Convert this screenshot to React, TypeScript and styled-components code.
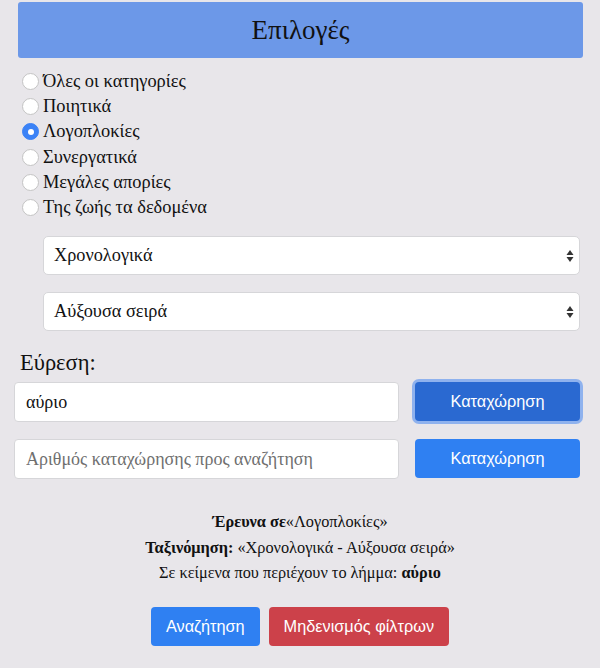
import React, { useState } from 'react';
import styled, { createGlobalStyle } from 'styled-components';

const categories = [
  'Όλες οι κατηγορίες',
  'Ποιητικά',
  'Λογοπλοκίες',
  'Συνεργατικά',
  'Μεγάλες απορίες',
  'Της ζωής τα δεδομένα',
];

const GlobalStyle = createGlobalStyle`
  html, body {
    margin: 0;
    padding: 0;
    background: #e8e6ea;
  }
  body {
    font-family: 'Liberation Serif', 'DejaVu Serif', serif;
    color: #111;
  }
`;

const Page = styled.div`
  width: 600px;
  min-height: 668px;
  padding: 2px 20px 0 14px;
  box-sizing: border-box;
`;

const Header = styled.h1`
  margin: 0 0 0 4px;
  width: 565px;
  height: 56px;
  display: flex;
  align-items: center;
  justify-content: center;
  background: #6c98e8;
  border-radius: 3px;
  font-weight: 400;
  font-size: 27px;
  color: #111;
`;

const RadioList = styled.div`
  display: flex;
  flex-direction: column;
  margin: 11px 0 0 8px;
`;

const RadioRow = styled.label`
  display: flex;
  align-items: center;
  height: 25.2px;
  font-size: 18.4px;
  gap: 4px;
`;

const RadioDot = styled.span<{ $checked: boolean }>`
  width: 17px;
  height: 17px;
  box-sizing: border-box;
  border-radius: 50%;
  flex-shrink: 0;
  background: ${({ $checked }) => ($checked ? '#3b82f6' : '#fff')};
  border: 1px solid ${({ $checked }) => ($checked ? '#3b82f6' : '#c4c4c4')};
  display: flex;
  align-items: center;
  justify-content: center;
  &::after {
    content: '';
    width: 6px;
    height: 6px;
    border-radius: 50%;
    background: #fff;
    display: ${({ $checked }) => ($checked ? 'block' : 'none')};
  }
`;

const Selects = styled.div`
  display: flex;
  flex-direction: column;
  gap: 17px;
  margin: 16px 0 0 29px;
`;

const SelectBox = styled.div`
  height: 39px;
  background: #fff;
  border: 1px solid #d6d6d9;
  border-radius: 5px;
  box-sizing: border-box;
  display: flex;
  align-items: center;
  justify-content: space-between;
  padding: 0 4px 0 10px;
  font-size: 18.3px;
`;

const Label = styled.div`
  font-size: 22.5px;
  margin: 19px 0 0 6px;
  height: 32px;
`;

const Row = styled.div`
  display: grid;
  grid-template-columns: 385px 165px;
  column-gap: 16px;
  & + & {
    margin-top: 17px;
  }
`;

const TextInput = styled.input`
  height: 40px;
  box-sizing: border-box;
  border: 1px solid #d6d6d9;
  border-radius: 4px;
  background: #fff;
  font-family: 'Liberation Serif', serif;
  font-size: 18px;
  padding: 0 11px;
  color: #111;
  outline: none;
  &::placeholder {
    color: #6f6f6f;
  }
`;

const Button = styled.button<{ $focused?: boolean; $variant?: 'blue' | 'red' }>`
  height: 39px;
  box-sizing: border-box;
  border: 1px solid transparent;
  border-radius: 4px;
  font-family: 'Liberation Sans', Arial, sans-serif;
  font-size: 16.3px;
  color: #fff;
  cursor: pointer;
  padding: 0 14px;
  background: ${({ $focused, $variant }) =>
    $variant === 'red' ? '#cc414a' : $focused ? '#2a69d1' : '#2f80f2'};
  box-shadow: ${({ $focused }) => ($focused ? '0 0 0 3px rgba(70, 135, 240, 0.55)' : 'none')};
`;

const Summary = styled.div`
  margin-top: 30px;
  text-align: center;
  font-size: 16.3px;
  line-height: 25.5px;
  padding-left: 6px;
`;

const Actions = styled.div`
  display: flex;
  justify-content: center;
  gap: 9px;
  margin-top: 21px;
  padding-left: 6px;
`;

const SelectArrows = () => (
  <svg width="10" height="16" viewBox="0 0 10 16">
    <path d="M5 2 L8.5 7 H1.5 Z" fill="#333" />
    <path d="M5 14 L8.5 9 H1.5 Z" fill="#333" />
  </svg>
);

const App: React.FC = () => {
  const [selected, setSelected] = useState(2);

  return (
    <Page>
      <GlobalStyle />
      <Header>Επιλογές</Header>
      <RadioList>
        {categories.map((c, i) => (
          <RadioRow key={c} onClick={() => setSelected(i)}>
            <RadioDot $checked={selected === i} />
            {c}
          </RadioRow>
        ))}
      </RadioList>
      <Selects>
        <SelectBox>
          Χρονολογικά
          <SelectArrows />
        </SelectBox>
        <SelectBox>
          Αύξουσα σειρά
          <SelectArrows />
        </SelectBox>
      </Selects>
      <Label>Εύρεση:</Label>
      <Row>
        <TextInput defaultValue="αύριο" />
        <Button $focused>Καταχώρηση</Button>
      </Row>
      <Row>
        <TextInput placeholder="Αριθμός καταχώρησης προς αναζήτηση" />
        <Button>Καταχώρηση</Button>
      </Row>
      <Summary>
        <div>
          <b>Έρευνα σε</b>«{categories[selected]}»
        </div>
        <div>
          <b>Ταξινόμηση:</b> «Χρονολογικά - Αύξουσα σειρά»
        </div>
        <div>
          Σε κείμενα που περιέχουν το λήμμα: <b>αύριο</b>
        </div>
      </Summary>
      <Actions>
        <Button>Αναζήτηση</Button>
        <Button $variant="red">Μηδενισμός φίλτρων</Button>
      </Actions>
    </Page>
  );
};

export default App;
